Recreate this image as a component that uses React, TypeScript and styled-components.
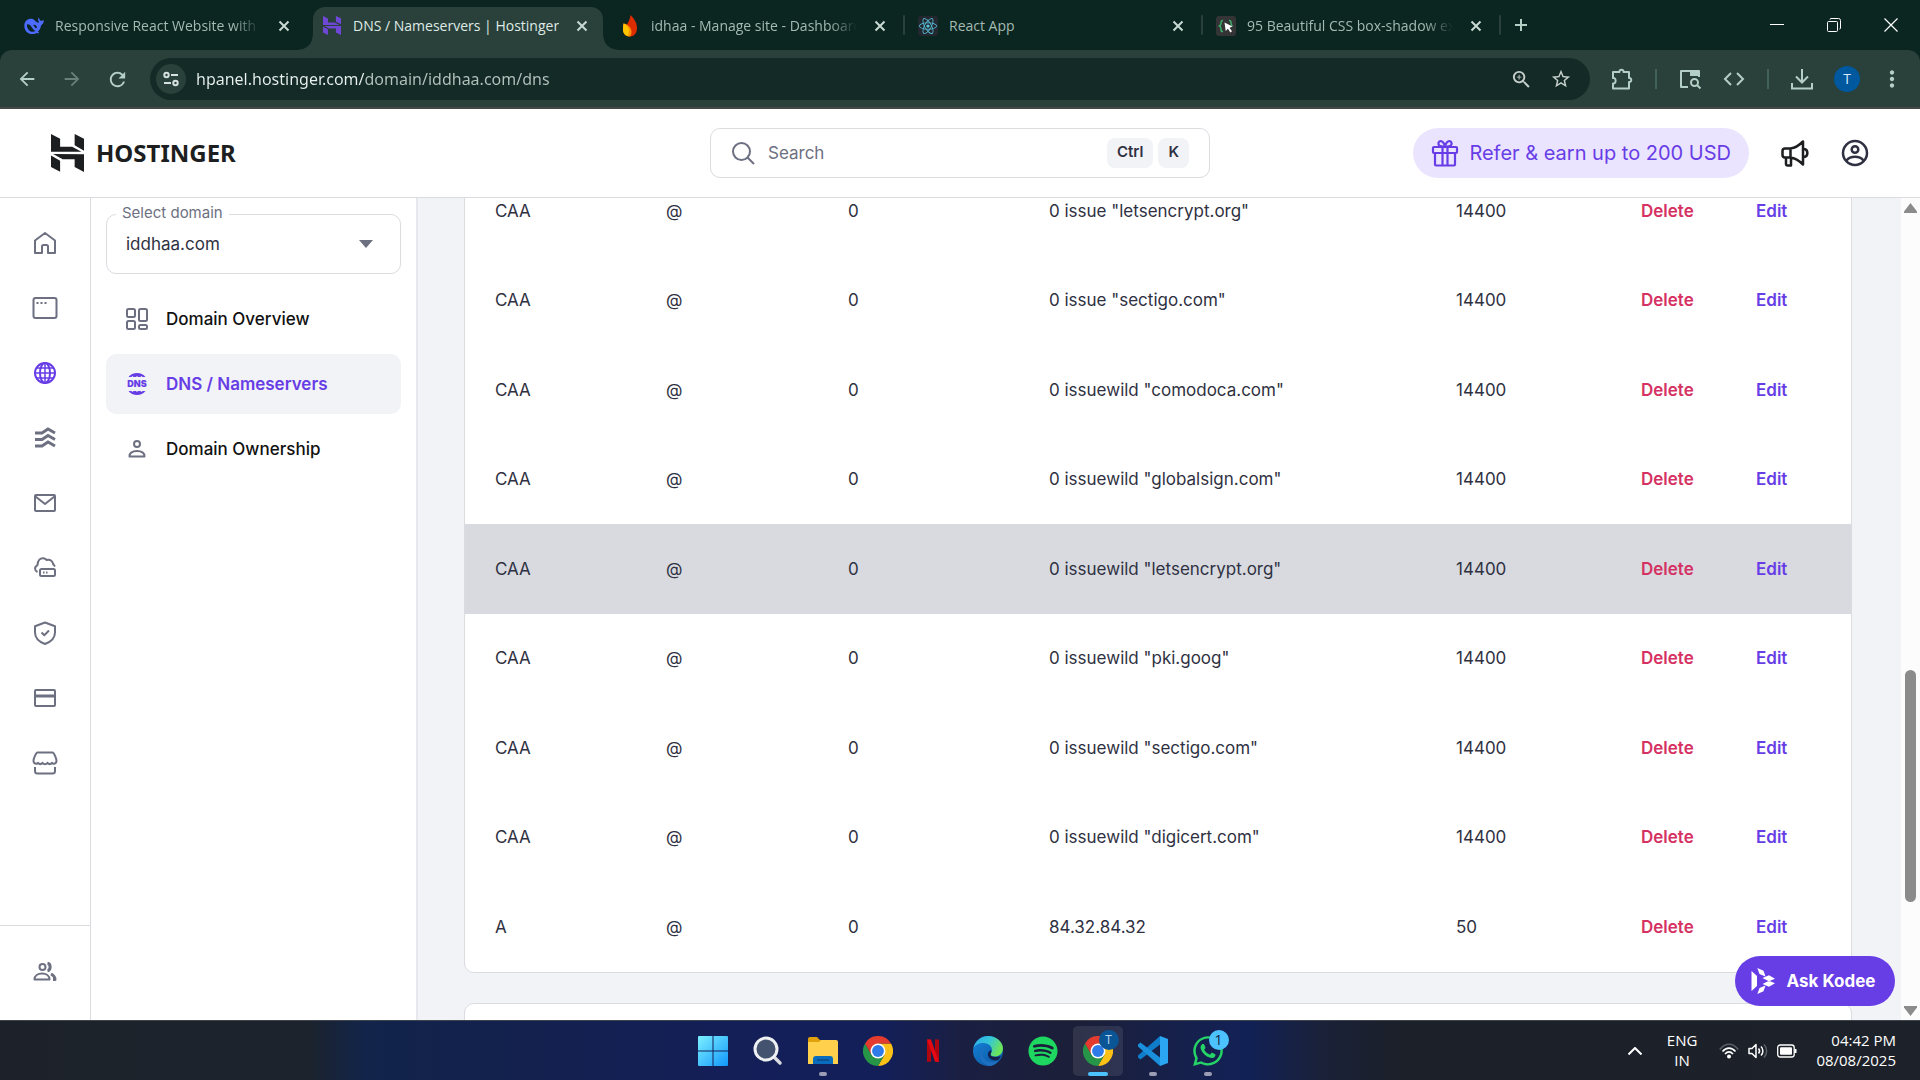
import React, { ReactNode } from "react";
import styled, { createGlobalStyle, css } from "styled-components";
import { MdArrowBack, MdArrowForward, MdRefresh, MdZoomIn, MdStarBorder, MdMoreVert } from "react-icons/md";
import { FaReact, FaSpotify, FaWhatsapp } from "react-icons/fa";

const uiFont = '"Open Sans", "Noto Sans", sans-serif';
const pageFont = 'Inter, "Open Sans", sans-serif';

const color = {
  strip: "#0b2520",
  toolbar: "#2a403a",
  field: "#132a26",
  chromeIcon: "#b4cfc5",
  chromeText: "#a3bbb2",
  ink: "#2f3142",
  dark: "#1d1e20",
  grey: "#6d7081",
  line: "#dadce0",
  mist: "#f2f3f7",
  purple: "#673de6",
  lilac: "#ebe4ff",
  red: "#d63163",
};

const GlobalStyle = createGlobalStyle`
  * { box-sizing: border-box; }
  html, body, #root { height: 100%; margin: 0; }
  body { font-family: ${pageFont}; overflow: hidden; background: #fff; }
  button, input, select { font: inherit; color: inherit; margin: 0; }
  button { background: none; border: 0; padding: 0; cursor: pointer; }
  svg { display: block; flex: none; }
`;

const Screen = styled.div`
  display: flex;
  flex-direction: column;
  height: 100vh;
`;

/* ---------- browser frame ---------- */

const TabStrip = styled.div`
  display: flex;
  align-items: flex-start;
  height: 50px;
  padding: 7px 0 0 15px;
  background: ${color.strip};
  font: 14px/20px ${uiFont};
`;

const TabItem = styled.div<{ $active?: boolean }>`
  position: relative;
  display: flex;
  align-items: center;
  gap: 11px;
  width: 290px;
  height: ${(p) => (p.$active ? "43px" : "37px")};
  margin-right: 8px;
  padding: 0 13px ${(p) => (p.$active ? "6px" : "0")} 9px;
  border-radius: 12px 12px 0 0;
  color: ${(p) => (p.$active ? "#dfeae6" : color.chromeText)};
  background: ${(p) => (p.$active ? color.toolbar : "transparent")};
  ${(p) =>
    p.$active &&
    css`
      &::before,
      &::after {
        content: "";
        position: absolute;
        bottom: 0;
        width: 14px;
        height: 14px;
      }
      &::before {
        left: -14px;
        background: radial-gradient(circle at 0 0, transparent 13px, ${color.toolbar} 14px);
      }
      &::after {
        right: -14px;
        background: radial-gradient(circle at 100% 0, transparent 13px, ${color.toolbar} 14px);
      }
    `}
`;

const TabIcon = styled.span<{ $tint?: string }>`
  display: flex;
  align-items: center;
  justify-content: center;
  flex: none;
  width: 20px;
  color: ${(p) => p.$tint ?? "inherit"};
`;

const TabTitle = styled.button<{ $fade?: boolean }>`
  flex: 1;
  min-width: 0;
  overflow: hidden;
  padding-top: 1px;
  white-space: nowrap;
  text-align: left;
  ${(p) =>
    p.$fade &&
    css`
      mask-image: linear-gradient(to right, #000 calc(100% - 28px), transparent);
    `}
`;

const TabClose = styled.button`
  display: flex;
  padding: 2px;
  margin-left: 4px;
  color: #c9d9d3;
`;

const TabRule = styled.span`
  width: 2px;
  height: 20px;
  margin: 8px 4px 0 -6px;
  border-radius: 1px;
  background: ${color.toolbar};
`;

const NewTab = styled.button`
  display: flex;
  margin: 11px 0 0 9px;
  color: ${color.chromeIcon};
`;

const WindowControls = styled.div`
  display: flex;
  align-items: center;
  gap: 33px;
  height: 35px;
  margin-left: auto;
  padding-right: 17px;
  color: #fff;
`;

const ToolbarBack = styled.div`
  background: ${color.strip};
`;

const Toolbar = styled.div`
  display: flex;
  align-items: center;
  height: 59px;
  padding: 1px 16px 0 15px;
  border-bottom: 2px solid #454a47;
  border-radius: 12px 12px 0 0;
  background: ${color.toolbar};
  color: ${color.chromeIcon};
`;

const IconButton = styled.button<{ $dim?: boolean }>`
  display: flex;
  align-items: center;
  justify-content: center;
  flex: none;
  width: 24px;
  height: 24px;
  opacity: ${(p) => (p.$dim ? 0.45 : 1)};
`;

const NavButtons = styled.div`
  display: flex;
  gap: 21px;
  margin-right: 21px;
`;

const AddressBar = styled.div`
  display: flex;
  align-items: center;
  flex: 1;
  gap: 16px;
  height: 42px;
  padding: 0 17px 0 6px;
  border-radius: 21px;
  background: ${color.field};
  color: #c6cfcb;
`;

const SiteInfo = styled.button`
  display: flex;
  align-items: center;
  justify-content: center;
  flex: none;
  width: 30px;
  height: 30px;
  margin-right: -6px;
  border-radius: 50%;
  background: ${color.toolbar};
`;

const AddressInput = styled.input`
  flex: 1;
  min-width: 0;
  padding: 0;
  border: 0;
  outline: 0;
  font: 16px/24px "Noto Sans", sans-serif;
  color: #e3ece9;
  -webkit-text-fill-color: transparent;
  background: linear-gradient(to right, #e9f1ee 168px, #b5c2bd 168px);
  background-clip: text;
`;

const ToolGroup = styled.div`
  display: flex;
  align-items: center;
  gap: 20px;
  padding-left: 20px;
`;

const ToolRule = styled.span`
  width: 2px;
  height: 20px;
  margin: 0 1px;
  background: #43605a;
`;

const Avatar = styled.button`
  width: 26px;
  height: 26px;
  border-radius: 50%;
  background: #00589f;
  color: #d3e8fa;
  font: 14px/26px ${uiFont};
`;

/* ---------- panel header ---------- */

const Header = styled.header`
  display: grid;
  grid-template-columns: 1fr 500px 1fr;
  align-items: center;
  flex: none;
  height: 89px;
  padding: 0 51px;
  border-bottom: 1px solid ${color.line};
  background: #fff;
`;

const Brand = styled.a`
  display: flex;
  align-items: center;
  gap: 12px;
  color: ${color.dark};
  text-decoration: none;
  font: 700 24px/32px "Noto Sans", sans-serif;
`;

const SearchBox = styled.label`
  display: flex;
  align-items: center;
  gap: 5px;
  height: 50px;
  padding: 0 20px;
  border: 1px solid ${color.line};
  border-radius: 10px;
  color: ${color.grey};
`;

const SearchInput = styled.input`
  flex: 1;
  min-width: 0;
  padding: 0 0 0 8px;
  border: 0;
  outline: 0;
  background: none;
  font-size: 17px;
  line-height: 24px;
  &::placeholder {
    color: ${color.grey};
    opacity: 1;
  }
`;

const Key = styled.kbd`
  height: 30px;
  padding: 0 10px;
  border-radius: 8px;
  background: ${color.mist};
  color: ${color.ink};
  font: 600 15px/28px ${pageFont};
`;

const HeaderActions = styled.div`
  display: flex;
  align-items: center;
  justify-content: flex-end;
  gap: 32px;
  color: ${color.dark};
`;

const ReferButton = styled.button`
  display: flex;
  align-items: center;
  justify-content: center;
  gap: 10px;
  height: 50px;
  padding: 0 18px;
  border-radius: 25px;
  background: ${color.lilac};
  color: ${color.purple};
  font-size: 20px;
  line-height: 24px;
  white-space: nowrap;
`;

/* ---------- body ---------- */

const Body = styled.div`
  display: flex;
  flex: 1;
  min-height: 0;
  overflow: hidden;
`;

const Rail = styled.nav`
  display: flex;
  flex-direction: column;
  flex: none;
  width: 91px;
  padding-top: 12px;
  border-right: 1px solid ${color.line};
  color: ${color.grey};
`;

const RailLink = styled.a<{ $active?: boolean }>`
  display: flex;
  align-items: center;
  justify-content: center;
  height: 65px;
  color: ${(p) => (p.$active ? color.purple : color.grey)};
`;

const RailFooter = styled.div`
  display: flex;
  flex-direction: column;
  justify-content: center;
  height: 95px;
  margin-top: auto;
  padding-bottom: 2px;
  border-top: 1px solid ${color.line};
`;

const SidePanel = styled.aside`
  flex: none;
  width: 327px;
  padding: 16px 15px;
  border-right: 2px solid #e6e7ef;
`;

const DomainField = styled.div`
  position: relative;
  margin-bottom: 15px;
  color: ${color.grey};
  svg {
    position: absolute;
    right: 28px;
    top: 26px;
    pointer-events: none;
  }
`;

const DomainLabel = styled.label`
  position: absolute;
  top: -11px;
  left: 10px;
  padding: 0 6px;
  background: #fff;
  font-size: 15px;
  line-height: 20px;
`;

const DomainSelect = styled.select`
  appearance: none;
  display: block;
  width: 100%;
  height: 60px;
  padding: 0 40px 0 19px;
  border: 1px solid ${color.line};
  border-radius: 10px;
  background: #fff;
  color: ${color.ink};
  font-size: 17px;
`;

const SideLink = styled.a<{ $active?: boolean }>`
  display: flex;
  align-items: center;
  gap: 17px;
  height: 60px;
  margin-bottom: 5px;
  padding-left: 19px;
  border-radius: 10px;
  font-size: 17px;
  text-decoration: none;
  background: ${(p) => (p.$active ? color.mist : "transparent")};
  color: ${(p) => (p.$active ? color.purple : "#111")};
  font-weight: ${(p) => (p.$active ? 600 : 500)};
  svg {
    color: ${(p) => (p.$active ? color.purple : color.grey)};
  }
`;

const Main = styled.main`
  position: relative;
  flex: 1;
  min-width: 0;
  overflow: hidden;
  padding: 0 49px 0 46px;
  background: ${color.mist};
`;

const Card = styled.section<{ $scrolled?: boolean }>`
  overflow: hidden;
  min-height: 90px;
  margin: ${(p) => (p.$scrolled ? "-33px 0 30px" : "0")};
  border: 1px solid ${color.line};
  border-radius: 10px;
  background: #fff;
`;

const Table = styled.table`
  width: 100%;
  table-layout: fixed;
  border-collapse: collapse;
  color: ${color.ink};
  font-size: 17px;
  line-height: 24px;
`;

const Cell = styled.td`
  padding: 0 0 0 30px;
`;

const Row = styled.tr<{ $hover?: boolean }>`
  height: 90px;
  background: ${(p) => (p.$hover ? "#d8dae0" : "transparent")};
  &:nth-child(even) {
    height: 89px;
    ${Cell} {
      padding-bottom: 1px;
    }
  }
`;

const RowAction = styled.button<{ $danger?: boolean }>`
  font-weight: 600;
  color: ${(p) => (p.$danger ? color.red : color.purple)};
`;

const AskButton = styled.button`
  position: absolute;
  right: 6px;
  bottom: 14px;
  display: flex;
  align-items: center;
  justify-content: center;
  gap: 12px;
  width: 160px;
  height: 50px;
  padding-right: 4px;
  border-radius: 25px;
  background: ${color.purple};
  color: #fff;
  font-weight: 700;
  font-size: 17px;
  white-space: nowrap;
`;

const ScrollTrack = styled.div`
  display: flex;
  flex-direction: column;
  align-items: center;
  flex: none;
  width: 19px;
  padding: 5px 0 4px;
  background: #fcfcfc;
  color: #8b8b8b;
`;

const ScrollThumb = styled.div`
  flex: 232;
  width: 11px;
  border-radius: 6px;
  background: #8b8b8b;
`;

const ScrollGap = styled.div<{ $part: number }>`
  flex: ${(p) => p.$part};
`;

/* ---------- taskbar ---------- */

const Taskbar = styled.footer`
  display: grid;
  grid-template-columns: 1fr auto 1fr;
  align-items: center;
  flex: none;
  height: 60px;
  border-top: 1px solid #3d444b;
  background: linear-gradient(
    to right,
    #1d222a 0%,
    #1c232c 16%,
    #12244a 19%,
    #14204f 29%,
    #141f58 38%,
    #131f59 46%,
    #1a1f42 50%,
    #1c1f38 56%,
    #16204a 61%,
    #122156 65%,
    #1a2138 69%,
    #1c2029 73%,
    #1d222a 100%
  );
  color: #fff;
  font: 15px/20px ${uiFont};
`;

const Apps = styled.div`
  grid-column: 2;
  display: flex;
  gap: 5px;
`;

const AppTile = styled.button<{ $active?: boolean }>`
  position: relative;
  display: flex;
  align-items: center;
  justify-content: center;
  width: 50px;
  height: 50px;
  border-radius: 5px;
  background: ${(p) => (p.$active ? "rgba(255,255,255,0.09)" : "transparent")};
`;

const Indicator = styled.span<{ $active?: boolean }>`
  position: absolute;
  bottom: 0;
  width: ${(p) => (p.$active ? "20px" : "8px")};
  height: 4px;
  border-radius: 2px;
  background: ${(p) => (p.$active ? "#4cc2ff" : "#9a9db5")};
`;

const Badge = styled.span<{ $dark?: boolean }>`
  position: absolute;
  top: 4px;
  right: 4px;
  width: 20px;
  height: 20px;
  border-radius: 50%;
  background: ${(p) => (p.$dark ? "#0a5596" : "#4cc2ff")};
  color: ${(p) => (p.$dark ? "#b9d7ef" : "#10243c")};
  font-size: ${(p) => (p.$dark ? "12px" : "14px")};
  line-height: 20px;
  text-align: center;
`;

const Tray = styled.div`
  display: flex;
  align-items: center;
  justify-content: flex-end;
  padding-right: 24px;
`;

const TrayText = styled.div<{ $end?: boolean }>`
  padding-bottom: 2px;
  text-align: ${(p) => (p.$end ? "right" : "center")};
`;

const TrayLang = styled(TrayText)`
  margin-left: 25px;
`;

const TrayIcons = styled.div`
  display: flex;
  align-items: center;
  gap: 9px;
  margin: 0 19px 0 22px;
`;

/* ---------- drawings ---------- */

type LineProps = { size?: number; width?: number; children: ReactNode };

const Line = ({ size = 24, width = 2, children }: LineProps) => (
  <svg
    width={size}
    height={size}
    viewBox="0 0 24 24"
    fill="none"
    stroke="currentColor"
    strokeWidth={width}
    strokeLinejoin="round"
    strokeLinecap="butt"
    aria-hidden="true"
  >
    {children}
  </svg>
);

const HostingerMark = ({ w, h }: { w: number; h: number }) => (
  <svg width={w} height={h} viewBox="1.8 0 20.4 24" preserveAspectRatio="none" fill="currentColor" aria-hidden="true">
    <path d="M16.415 0v7.16l5.785 3.384V2.949L16.415 0zM1.8 0v11.237h18.815L14.89 8.09l-7.457-.003V3.024L1.8 0zm14.615 20.894v-5.019l-7.514-.005c.007.033-5.82-3.197-5.82-3.197l19.119.091V24l-5.785-3.106zM1.8 13.551v7.343l5.633 2.949v-6.988L1.8 13.551z" />
  </svg>
);

const Whale = () => (
  <svg width="20" height="20" viewBox="0 0 20 20" aria-hidden="true">
    <path
      fill="#4d6bfe"
      d="M19.8 4.1c-.4-.2-.9.3-1.500.6-.6.3-1.400.2-2-.2-.8-.6-.9-1.700-1.200-2.500-.2-.3-.6-.3-.7.1-.6 1.600-.3 3 .9 4.300-1.100.4-1.800.1-2.800-.5C10.700 4.600 9.900 3 8 2.700 4 2.200.4 5 .3 9.400c-.1 5 3.700 8.900 8.300 8.700 1.900 0 3-.5 4.100-1.200 1 .5 2.100.6 2.400.3.3-.3-.9-1-1.100-1.600 1.800-1.700 2.700-3.900 3-6.200 1.600-.7 2.900-2.600 2.800-5.300z"
    />
    <path
      fill={color.strip}
      d="M3 8.300c1.600-.3 3.100.6 4.200 2.100 1.300 1.800 2.300 3.600 4.400 4.700-2.500 1.200-5.200.7-6.900-1.200C3.300 12.300 2.700 10.300 3 8.300zm6.800.4c1.400-.3 2.900.8 3.200 2.500-.2 1-.8 1.300-1.300.9-.9-.6-1-1.800-1.900-2.200-.5-.3-.5-1 0-1.200z"
    />
  </svg>
);

const Flame = () => (
  <svg width="20" height="22" viewBox="0 0 20 22" aria-hidden="true">
    <path fill="#dd2c00" d="M10.500 0c4 4.200 6.500 8 6.500 13 0 5-2.700 8-6.500 8.500C7 21 5 18 6 13c.4-4 4-7 4.500-13z" />
    <path fill="#ff9100" d="M3.500 8.500c4 .4 8 4 8 8.500 0 2-.6 3.500-1.500 4.500-4 .2-7-2.500-7-7 0-2 .2-4 .5-6z" />
    <path fill="#ffc400" d="M3.500 8.500C6.700 9.800 9 12.500 9 16c0 2-.4 3.500-1 5-3-.6-5-3-5-6.500 0-2 .2-4 .5-6z" />
  </svg>
);

const SnippetIcon = () => (
  <svg width="20" height="20" viewBox="0 0 20 20" aria-hidden="true">
    <rect width="20" height="20" rx="3" fill="#343436" />
    <g fill="none" stroke="#3fae6a" strokeWidth="1.500">
      <path d="M7 4.500c-2 0-2 .8-2 2.500S4.500 9.500 3.500 10c1 .5 1.500 1 1.500 3s0 2.500 2 2.500" />
      <path d="M13 4.500c2 0 2 .8 2 2.500s.5 2.500 1.500 3" />
    </g>
    <path d="M8.500 6.500l8 4-3 1.200 2.500 3.500-1.600 1.200-2.500-3.600-2.200 2.200z" fill="#fff" />
  </svg>
);

const ReactTile = styled.span`
  display: flex;
  align-items: center;
  justify-content: center;
  flex: none;
  width: 20px;
  height: 20px;
  border-radius: 3px;
  background: #23272f;
  color: #58c4dc;
`;

const Cross = () => (
  <svg width="12" height="12" viewBox="0 0 12 12" stroke="currentColor" strokeWidth="2" aria-hidden="true">
    <path d="M1.500 1.500l9 9M10.500 1.500l-9 9" />
  </svg>
);

const SiteSettings = () => (
  <svg width="18" height="18" viewBox="0 0 18 18" fill="none" stroke="#d6e2de" strokeWidth="2" aria-hidden="true">
    <circle cx="4.500" cy="5" r="2.200" />
    <path d="M9 5h7M2 13h7" />
    <circle cx="13.500" cy="13" r="2.200" />
  </svg>
);

const HomeIcon = () => (
  <Line>
    <path d="M2 22V9.500L12 2l10 7.500V22h-7v-6.500a1.500 1.500 0 0 0-1.500-1.500h-3A1.500 1.500 0 0 0 9 15.500V22z" />
  </Line>
);

const WindowIcon = () => (
  <svg width="26" height="24" viewBox="0 0 26 24" fill="none" stroke="currentColor" strokeWidth="2" aria-hidden="true">
    <rect x="1.500" y="2" width="23" height="20" rx="2" />
    <path d="M4.500 7h2M8.500 7h2M12.500 7h2" />
  </svg>
);

const GlobeIcon = () => (
  <Line>
    <circle cx="12" cy="12" r="10" />
    <ellipse cx="12" cy="12" rx="5" ry="10" />
    <path d="M12 2v20M2 12h20M4 7h16M4 17h16" strokeWidth="1.500" />
  </Line>
);

const HorizonsIcon = () => (
  <Line width={3}>
    <path d="M2 7h7l6-4 7 4M2 13.500h7l6-4 7 4M2 20h7l6-4 7 4" strokeLinejoin="miter" />
  </Line>
);

const MailIcon = () => (
  <Line>
    <rect x="2" y="4" width="20" height="16" rx="1" />
    <path d="M2.500 5.500L12 13l9.500-7.500" />
  </Line>
);

const CloudServerIcon = () => (
  <Line>
    <path d="M4.500 16C1.500 14.500 1 11 4.500 9.200 4.500 4 7.500 1.800 10.500 2.200c1.500.2 2.500 1 3.200 1.800 4-.8 6 1.800 6.500 4.200l1.800 2.300" />
    <rect x="7" y="13" width="15" height="7" rx="1.500" />
    <path d="M10 16.500h1.500M13 16.500h1.500" />
  </Line>
);

const ShieldIcon = () => (
  <Line>
    <path d="M12 1.500l10 3.700v6.300c0 5-4 9.300-10 11.500C6 20.800 2 16.500 2 11.500V5.200z" />
    <path d="M8.500 11.500l2.800 2.800 4.700-4.800" />
  </Line>
);

const CardIcon = () => (
  <Line>
    <rect x="2" y="4" width="20" height="16" rx="1" />
    <path d="M2 10h20" strokeWidth="3" />
  </Line>
);

const ShopIcon = () => (
  <svg width="26" height="24" viewBox="0 0 26 24" fill="none" stroke="currentColor" strokeWidth="2" aria-hidden="true">
    <path d="M5.500 1.500h15c1.500 0 4 6 4 8.500s-3 3.500-4.500 2c-1.500 1.500-3 1.500-4.500 0-1.500 1.500-3.500 1.500-5 0-1.500 1.500-3 1.500-4.500 0-1.500 1.500-4.500.5-4.500-2s2.500-8.500 4-8.500z" />
    <path d="M3 16v4c0 2 1 2.500 2.500 2.500h15c1.500 0 2.500-.5 2.500-2.500v-4" />
  </svg>
);

const PeopleIcon = () => (
  <Line>
    <circle cx="9.500" cy="7" r="3" />
    <path d="M1.500 19.500c0-4 3.500-6 7.500-6s7.500 2 7.500 6z" />
    <path d="M14.500 3.300c3.500.5 3.500 6.800 0 7.400M18 14c2.500 1.200 4 3 4 5.500h-2" strokeWidth="3" />
  </Line>
);

const OverviewIcon = () => (
  <Line>
    <rect x="2" y="2" width="8" height="8" rx="1.500" />
    <rect x="14" y="2" width="8" height="12" rx="1.500" />
    <rect x="2" y="14" width="8" height="8" rx="1.500" />
    <rect x="14" y="18" width="8" height="4" rx="1.500" />
  </Line>
);

const DnsIcon = () => (
  <svg width="24" height="24" viewBox="0 0 24 24" fill="currentColor" aria-hidden="true">
    <path d="M3.500 5C5.500 2.500 8.500 1 12 1s6.500 1.500 8.500 4h-3l-1-1-1 1h-2.500L12 4l-1 1H8.500l-1-1-1 1zM3.500 19c2 2.500 5 4 8.500 4s6.500-1.500 8.500-4h-3l-1 1-1-1h-2.500l-1 1-1-1H8.500l-1 1-1-1z" />
    <text x="12" y="15" textAnchor="middle" fontFamily="Inter, sans-serif" fontSize="9" fontWeight="900">
      DNS
    </text>
  </svg>
);

const OwnerIcon = () => (
  <Line>
    <circle cx="12" cy="7" r="3" />
    <path d="M4.500 19.500c0-4 3.500-5.500 7.500-5.500s7.500 1.500 7.500 5.500z" />
  </Line>
);

const SearchGlyph = () => (
  <Line size={24} width={2}>
    <circle cx="10.500" cy="10.500" r="8.500" />
    <path d="M16.500 16.500l6.500 6.500" />
  </Line>
);

const GiftIcon = () => (
  <svg width="28" height="28" viewBox="0 0 28 28" fill="none" stroke="currentColor" strokeWidth="2.200" strokeLinejoin="round" aria-hidden="true">
    <rect x="2" y="8" width="24" height="6" rx="1" />
    <path d="M4 14v11.500a1 1 0 0 0 1 1h18a1 1 0 0 0 1-1V14M11.500 8v18.500M16.500 8v18.500" />
    <path d="M14 7.500C10 8 7 7 7.500 4S12.500 1 14 7.500zM14 7.500C18 8 21 7 20.500 4S15.500 1 14 7.500z" />
  </svg>
);

const MegaphoneIcon = () => (
  <svg width="28" height="28" viewBox="0 0 28 28" fill="none" stroke="currentColor" strokeWidth="2.500" strokeLinejoin="round" aria-hidden="true">
    <path d="M9.500 9.500H4A2.500 2.500 0 0 0 1.500 12v4A2.500 2.500 0 0 0 4 18.500h5.500M9.500 9.500C14 9 18 6.500 22 2.500v23c-4-4-8-6.500-12.500-7zM5 18.500V25a1.500 1.500 0 0 0 1.500 1.500H10v-8" />
    <path d="M23 10c4.500.5 4.500 7.500 0 8" />
  </svg>
);

const AccountIcon = () => (
  <svg width="28" height="28" viewBox="0 0 28 28" fill="none" stroke={color.ink} strokeWidth="2.500" aria-hidden="true">
    <circle cx="14" cy="14" r="12" />
    <circle cx="14" cy="10.500" r="3.300" />
    <path d="M5.500 21.500c4-5 13-5 17 0" />
  </svg>
);

const KodeeIcon = () => (
  <svg width="24" height="26" viewBox="0 0 24 26" fill="#fff" aria-hidden="true">
    <path d="M.5 3l5.500 5v10l-5.500 5z" />
    <path d="M6.300 0l6.200 2.800 2 5.700-6-2.500zM11.500 10l6.500-2.800 6 3.600-6 2.400zM6.300 26l6.200-2.800 2-5.700-6 2.500zM11.500 16l6.500 2.800 6-3.600-6-2.400z" />
  </svg>
);

const ChromeIcon = () => (
  <svg width="30" height="30" viewBox="0 0 48 48" aria-hidden="true">
    <path fill="#fbc116" d="M34.400 30L24 48a24 24 0 0 0 20.800-36H24z" />
    <path fill="#269547" d="M24 48A24 24 0 0 1 3.200 12l10.400 18L24 36l10.400-6z" />
    <path fill="#e33b2e" d="M3.200 12A24 24 0 0 1 44.800 12H24L13.600 30z" />
    <circle cx="24" cy="24" r="12" fill="#fff" />
    <circle cx="24" cy="24" r="9.500" fill="#2f7bea" />
  </svg>
);

const WindowsIcon = () => (
  <svg width="30" height="30" viewBox="0 0 30 30" aria-hidden="true">
    <defs>
      <linearGradient id="win" x1="0" y1="0" x2="1" y2="1" gradientUnits="objectBoundingBox">
        <stop offset="0" stopColor="#7cf0ff" />
        <stop offset="1" stopColor="#1197fb" />
      </linearGradient>
    </defs>
    <path fill="url(#win)" d="M1 0h13.500v14.500H0V1a1 1 0 0 1 1-1zM15.500 0H29a1 1 0 0 1 1 1v13.500H15.500zM0 15.500h14.500V30H1a1 1 0 0 1-1-1zM15.500 15.500H30V29a1 1 0 0 1-1 1H15.500z" />
  </svg>
);

const TaskSearchIcon = () => (
  <svg width="30" height="30" viewBox="0 0 30 30" aria-hidden="true">
    <path d="M20 20l7 7" stroke="#d9dbdf" strokeWidth="3.500" strokeLinecap="round" />
    <circle cx="13" cy="13" r="11" fill="#43526f" stroke="#eef0f2" strokeWidth="3" />
  </svg>
);

const FolderIcon = () => (
  <svg width="30" height="30" viewBox="0 0 30 30" aria-hidden="true">
    <path fill="#e0a10d" d="M0 3a2 2 0 0 1 2-2h7l3 3h16v6H0z" />
    <path fill="#ffd04c" d="M0 6h11l2-2h15a2 2 0 0 1 2 2v22H0z" />
    <path fill="#0a6cbd" d="M5 28v-5a3 3 0 0 1 3-3h14a3 3 0 0 1 3 3v5z" />
    <path d="M9 24h12" stroke="#0b4a86" strokeWidth="1.500" />
  </svg>
);

const NetflixIcon = () => (
  <svg width="12" height="24" viewBox="0 0 12 23" aria-hidden="true">
    <path fill="#b1060f" d="M0 0h4v22l-4 .500zM8 0h4v22.500L8 22z" />
    <path fill="#e50914" d="M0 0h4l8 22.500L8 22z" />
  </svg>
);

const EdgeIcon = () => (
  <svg width="30" height="30" viewBox="0 0 30 30" aria-hidden="true">
    <defs>
      <linearGradient id="edgeTop" x1="0" y1="0" x2="1" y2="0.400">
        <stop offset="0" stopColor="#2fa8ea" />
        <stop offset="0.550" stopColor="#34c6d8" />
        <stop offset="1" stopColor="#6be35a" />
      </linearGradient>
      <linearGradient id="edgeBody" x1="0" y1="0" x2="0.800" y2="1">
        <stop offset="0" stopColor="#1583d8" />
        <stop offset="1" stopColor="#0c5aa8" />
      </linearGradient>
    </defs>
    <circle cx="15" cy="15" r="15" fill="url(#edgeBody)" />
    <path fill="url(#edgeTop)" d="M.5 12C2 5 8 0 15 0c8.500 0 15 6 15 12.500 0 5-4 8-8 8-3 0-4.500-1-4.500-2s1.500-1.500 1.500-4.500C19 10 15 7 10.500 7 6 7 2 9 .5 12z" />
    <path fill="#151f4b" d="M17.500 18.500c0 1 1.500 2.500 5 2.500 2.500 0 4.500-.8 5.500-1.300-.8 1.800-2 3.300-3 4.300-5 1.500-9-1-10-4.500-.5-2 .5-4.500 3-5.500.8 2-.5 3.500-.5 4.500z" />
    <path fill="#1e6fc0" d="M9.500 18c0-4 3-7.500 6.500-8-4.500-.5-8.500 3-9 8-.400 6 4 11.500 9.500 12 4 0 7-2.500 8.500-5.500-8 3.500-15.500-.500-15.500-6.500z" />
  </svg>
);

const CodeIcon = () => (
  <svg width="30" height="30" viewBox="0 0 30 30" aria-hidden="true">
    <path fill="#0f7dc9" d="M22 0L0 19.500v2L2.500 23.500 22 8.500z" />
    <path fill="#1a8fdc" d="M22 30L0 10.500v-2L2.500 6.500 22 21.500z" />
    <path fill="#2aa6f2" d="M22 0l8 3v24l-8 3z" />
  </svg>
);

/* ---------- content ---------- */

type BrowserTab = {
  title: string;
  icon: ReactNode;
  tint?: string;
  active?: boolean;
  fade?: boolean;
  rule?: boolean;
};

const tabs: BrowserTab[] = [
  { title: "Responsive React Website with Firebase", icon: <Whale />, fade: true },
  { title: "DNS / Nameservers | Hostinger", icon: <HostingerMark w={18} h={19} />, tint: "#6f47d6", active: true },
  { title: "idhaa - Manage site - Dashboard", icon: <Flame />, fade: true, rule: true },
  { title: "React App", icon: <ReactTile><FaReact size={18} /></ReactTile>, rule: true },
  { title: "95 Beautiful CSS box-shadow examples", icon: <SnippetIcon />, fade: true, rule: true },
];

const railItems = [
  { label: "Home", icon: <HomeIcon /> },
  { label: "Websites", icon: <WindowIcon /> },
  { label: "Domains", icon: <GlobeIcon />, active: true },
  { label: "Horizons", icon: <HorizonsIcon /> },
  { label: "Emails", icon: <MailIcon /> },
  { label: "VPS", icon: <CloudServerIcon /> },
  { label: "Security", icon: <ShieldIcon /> },
  { label: "Billing", icon: <CardIcon /> },
  { label: "Marketplace", icon: <ShopIcon /> },
];

type DnsRecord = { type: string; content: string; ttl: string; hover?: boolean };

const records: DnsRecord[] = [
  { type: "CAA", content: '0 issue "letsencrypt.org"', ttl: "14400" },
  { type: "CAA", content: '0 issue "sectigo.com"', ttl: "14400" },
  { type: "CAA", content: '0 issuewild "comodoca.com"', ttl: "14400" },
  { type: "CAA", content: '0 issuewild "globalsign.com"', ttl: "14400" },
  { type: "CAA", content: '0 issuewild "letsencrypt.org"', ttl: "14400", hover: true },
  { type: "CAA", content: '0 issuewild "pki.goog"', ttl: "14400" },
  { type: "CAA", content: '0 issuewild "sectigo.com"', ttl: "14400" },
  { type: "CAA", content: '0 issuewild "digicert.com"', ttl: "14400" },
  { type: "A", content: "84.32.84.32", ttl: "50" },
];

const Browser = () => (
  <>
    <TabStrip>
      {tabs.map((t) => (
        <React.Fragment key={t.title}>
          <TabItem $active={t.active}>
            <TabIcon $tint={t.tint}>{t.icon}</TabIcon>
            <TabTitle $fade={t.fade}>{t.title}</TabTitle>
            <TabClose aria-label="Close tab">
              <Cross />
            </TabClose>
          </TabItem>
          {t.rule && <TabRule />}
        </React.Fragment>
      ))}
      <NewTab aria-label="New tab">
        <svg width="14" height="14" viewBox="0 0 14 14" stroke="currentColor" strokeWidth="2">
          <path d="M7 1v12M1 7h12" />
        </svg>
      </NewTab>
      <WindowControls>
        <IconButton aria-label="Minimize">
          <svg width="14" height="14" viewBox="0 0 14 14" stroke="currentColor">
            <path d="M0 6.500h14" />
          </svg>
        </IconButton>
        <IconButton aria-label="Restore">
          <svg width="14" height="14" viewBox="0 0 14 14" fill="none" stroke="currentColor">
            <rect x="0.500" y="3.500" width="10" height="10" rx="1" />
            <path d="M3 1.500a1 1 0 0 1 1-1h7.500a2 2 0 0 1 2 2V10a1 1 0 0 1-1 1" />
          </svg>
        </IconButton>
        <IconButton aria-label="Close window">
          <svg width="14" height="14" viewBox="0 0 14 14" stroke="currentColor" strokeWidth="1.200">
            <path d="M.5.5l13 13M13.500.5l-13 13" />
          </svg>
        </IconButton>
      </WindowControls>
    </TabStrip>
    <ToolbarBack>
      <Toolbar>
        <NavButtons>
          <IconButton aria-label="Back"><MdArrowBack size={22} /></IconButton>
          <IconButton aria-label="Forward" $dim><MdArrowForward size={22} /></IconButton>
          <IconButton aria-label="Reload"><MdRefresh size={23} /></IconButton>
        </NavButtons>
        <AddressBar>
          <SiteInfo aria-label="View site information"><SiteSettings /></SiteInfo>
          <AddressInput aria-label="Address" defaultValue="hpanel.hostinger.com/domain/iddhaa.com/dns" />
          <IconButton aria-label="Zoom"><MdZoomIn size={23} /></IconButton>
          <IconButton aria-label="Bookmark this tab"><MdStarBorder size={22} /></IconButton>
        </AddressBar>
        <ToolGroup>
          <IconButton aria-label="Extensions">
            <Line width={2}>
              <path d="M3 5h6.500c-.5-3 4.500-3 4 0H19v6c3-.5 3 4.500 0 4v6.500H3V16.500c3.500.5 3.500-6 0-5.500z" />
            </Line>
          </IconButton>
          <ToolRule />
          <IconButton aria-label="Search this page">
            <Line width={2}>
              <path d="M10 20H3V4h18v6" />
              <path d="M12 3h9v6h-9z" fill="currentColor" stroke="none" />
              <circle cx="16.500" cy="15.500" r="3.500" />
              <path d="M19 18l3.500 3.500" />
            </Line>
          </IconButton>
          <IconButton aria-label="Developer tools">
            <Line width={2}>
              <path d="M9 6l-6 6 6 6M15 6l6 6-6 6" strokeLinejoin="miter" />
            </Line>
          </IconButton>
          <ToolRule />
          <IconButton aria-label="Downloads">
            <Line width={2}>
              <path d="M12 2v13M6 9.500l6 6 6-6M2 16v5.500h20V16" strokeLinejoin="miter" />
            </Line>
          </IconButton>
          <Avatar aria-label="Profile">T</Avatar>
          <IconButton aria-label="Menu"><MdMoreVert size={26} /></IconButton>
        </ToolGroup>
      </Toolbar>
    </ToolbarBack>
  </>
);

const PanelHeader = () => (
  <Header>
    <Brand href="#">
      <HostingerMark w={33} h={38} />
      HOSTINGER
    </Brand>
    <SearchBox>
      <SearchGlyph />
      <SearchInput aria-label="Search" placeholder="Search" />
      <Key>Ctrl</Key>
      <Key>K</Key>
    </SearchBox>
    <HeaderActions>
      <ReferButton>
        <GiftIcon />
        Refer &amp; earn up to 200 USD
      </ReferButton>
      <button aria-label="News"><MegaphoneIcon /></button>
      <button aria-label="Account"><AccountIcon /></button>
    </HeaderActions>
  </Header>
);

const RecordsTable = () => (
  <Table aria-label="DNS records">
    <colgroup>
      <col style={{ width: 171 }} />
      <col style={{ width: 182 }} />
      <col style={{ width: 201 }} />
      <col />
      <col style={{ width: 185 }} />
      <col style={{ width: 115 }} />
      <col style={{ width: 125 }} />
    </colgroup>
    <tbody>
      {records.map((r) => (
        <Row key={r.content} $hover={r.hover}>
          <Cell>{r.type}</Cell>
          <Cell>@</Cell>
          <Cell>0</Cell>
          <Cell>{r.content}</Cell>
          <Cell>{r.ttl}</Cell>
          <Cell><RowAction $danger>Delete</RowAction></Cell>
          <Cell><RowAction>Edit</RowAction></Cell>
        </Row>
      ))}
    </tbody>
  </Table>
);

const Panel = () => (
  <Body>
    <Rail aria-label="Main">
      {railItems.map((i) => (
        <RailLink key={i.label} href="#" aria-label={i.label} $active={i.active}>
          {i.icon}
        </RailLink>
      ))}
      <RailFooter>
        <RailLink href="#" aria-label="Account sharing"><PeopleIcon /></RailLink>
      </RailFooter>
    </Rail>
    <SidePanel>
      <DomainField>
        <DomainSelect id="domain" defaultValue="iddhaa.com">
          <option>iddhaa.com</option>
        </DomainSelect>
        <DomainLabel htmlFor="domain">Select domain</DomainLabel>
        <svg width="14" height="8" viewBox="0 0 14 8" fill="currentColor"><path d="M0 0h14L7 8z" /></svg>
      </DomainField>
      <SideLink href="#"><OverviewIcon />Domain Overview</SideLink>
      <SideLink href="#" $active><DnsIcon />DNS / Nameservers</SideLink>
      <SideLink href="#"><OwnerIcon />Domain Ownership</SideLink>
    </SidePanel>
    <Main>
      <Card $scrolled><RecordsTable /></Card>
      <Card />
      <AskButton><KodeeIcon />Ask Kodee</AskButton>
    </Main>
    <ScrollTrack aria-hidden="true">
      <svg width="13" height="10" viewBox="0 0 13 10" fill="currentColor"><path d="M6.500 0L13 8.500V10H0V8.500z" /></svg>
      <ScrollGap $part={457} />
      <ScrollThumb />
      <ScrollGap $part={104} />
      <svg width="13" height="10" viewBox="0 0 13 10" fill="currentColor"><path d="M6.500 10L13 1.500V0H0v1.500z" /></svg>
    </ScrollTrack>
  </Body>
);

const Desktop = () => (
  <Taskbar>
    <Apps>
      <AppTile aria-label="Start"><WindowsIcon /></AppTile>
      <AppTile aria-label="Search"><TaskSearchIcon /></AppTile>
      <AppTile aria-label="File Explorer"><FolderIcon /><Indicator /></AppTile>
      <AppTile aria-label="Chrome"><ChromeIcon /></AppTile>
      <AppTile aria-label="Netflix"><NetflixIcon /></AppTile>
      <AppTile aria-label="Edge"><EdgeIcon /></AppTile>
      <AppTile aria-label="Spotify"><FaSpotify size={30} color="#1ed760" /></AppTile>
      <AppTile aria-label="Chrome, profile T" $active>
        <ChromeIcon />
        <Badge $dark>T</Badge>
        <Indicator $active />
      </AppTile>
      <AppTile aria-label="Visual Studio Code"><CodeIcon /><Indicator /></AppTile>
      <AppTile aria-label="WhatsApp">
        <FaWhatsapp size={34} color="#25d366" />
        <Badge>1</Badge>
        <Indicator />
      </AppTile>
    </Apps>
    <Tray>
      <svg width="14" height="8" viewBox="0 0 14 8" fill="none" stroke="#fff" strokeWidth="2"><path d="M.5 7.500L7 1l6.500 6.500" /></svg>
      <TrayLang>ENG<br />IN</TrayLang>
      <TrayIcons>
        <svg width="20" height="16" viewBox="0 0 20 16" fill="none" stroke="#fff" strokeWidth="1.600">
          <path d="M.8 6.500C6-.5 14-.5 19.200 6.500" stroke="#5b6067" />
          <path d="M3.500 8.500c4-4.500 9-4.500 13 0M6 11c2.500-2.800 5.500-2.800 8 0" />
          <circle cx="10" cy="13.500" r="2" fill="#fff" stroke="none" />
        </svg>
        <svg width="20" height="16" viewBox="0 0 20 16" fill="none" stroke="#fff" strokeWidth="1.500">
          <path d="M1 5.500h3l4-4v13l-4-4H1z" strokeLinejoin="round" />
          <path d="M10.500 5.500c1.300 1.500 1.300 3.500 0 5M13 3.500c2.500 2.500 2.500 6.500 0 9" />
          <path d="M16 1.500c3.500 3.500 3.500 9.500 0 13" stroke="#5b6067" />
        </svg>
        <svg width="20" height="14" viewBox="0 0 20 14" fill="none" stroke="#fff" strokeWidth="1.300">
          <rect x="0.700" y="1" width="16.500" height="12" rx="2.500" />
          <rect x="3" y="3.200" width="12" height="7.600" rx="1" fill="#fff" stroke="none" />
          <path d="M18.500 5v4" strokeWidth="2" />
        </svg>
      </TrayIcons>
      <TrayText $end>04:42 PM<br />08/08/2025</TrayText>
    </Tray>
  </Taskbar>
);

export default function App() {
  return (
    <Screen>
      <GlobalStyle />
      <Browser />
      <PanelHeader />
      <Panel />
      <Desktop />
    </Screen>
  );
}
